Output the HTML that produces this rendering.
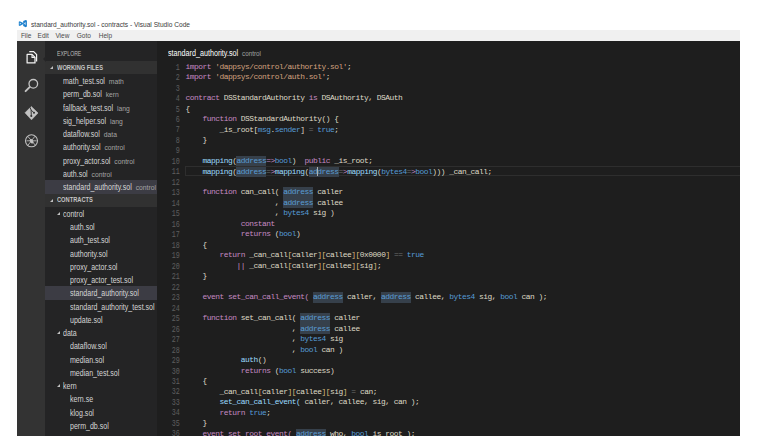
<!DOCTYPE html>
<html><head><meta charset="utf-8"><style>
*{margin:0;padding:0;box-sizing:border-box}
html,body{width:757px;height:439px;overflow:hidden;background:#fff;position:relative;font-family:"Liberation Sans",sans-serif}
.abs{position:absolute}
#title{position:absolute;left:30.5px;top:19.9px;font-size:8px;color:#3a3a3a;white-space:nowrap;line-height:9px;transform:scaleX(0.825);transform-origin:0 0}
#vsico{position:absolute;left:17px;top:18px}
#menu{position:absolute;left:17px;top:30px;width:723px;height:11px;background:#f0f0f0}
#menu span{position:absolute;top:1.5px;font-size:6.5px;color:#4a4a4a;line-height:8px}
#win{position:absolute;left:17px;top:41px;width:723px;height:395px;background:#1e1e1e;overflow:hidden}
#act{position:absolute;left:0;top:0;width:28px;height:395px;background:#333333}
#side{position:absolute;left:28px;top:0;width:112px;height:395px;background:#242425;overflow:hidden}
.ico{position:absolute}
#explore{position:absolute;left:11.7px;top:8.6px;font-size:6.5px;color:#bbbbbb;line-height:8px;transform:scaleX(0.79);transform-origin:0 0}
.row{position:absolute;left:0;width:112px;height:13.26px}
.row.hdr{background:#313131}
.row.sel{background:#3c3c44}
.it{position:absolute;top:2.9px;font-size:8.2px;line-height:9px;color:#d6d6d6;white-space:nowrap;transform:scaleX(0.86);transform-origin:0 0}
.desc{font-size:7.85px;color:#a4a4a4;margin-left:4.6px}
.ht{position:absolute;left:11.7px;top:2.6px;font-size:7px;font-weight:bold;color:#c4c4c4;line-height:8px;white-space:nowrap;transform:scaleX(0.815);transform-origin:0 0}
.tri{position:absolute;top:5px;width:0;height:0;border-left:3px solid transparent;border-bottom:3px solid #c0c0c0}
.tri2{position:absolute;top:5px;width:0;height:0;border-left:3px solid transparent;border-bottom:3px solid #c0c0c0}
#edtitle{position:absolute;left:150.6px;top:8.2px;font-size:8.3px;color:#ffffff;line-height:9px;white-space:nowrap;transform:scaleX(0.865);transform-origin:0 0}
#edtitle span{color:#a0a0a0;font-size:7.3px;margin-left:4.5px}
.ln{position:absolute;left:120px;width:42.9px;text-align:right;font-family:"Liberation Mono",monospace;font-size:8.4px;line-height:10.48px;height:10.48px;color:#5e5e5e;margin-top:0.9px;transform:scaleX(0.8);transform-origin:100% 0}
.cl{position:absolute;left:168.4px;font-family:"Liberation Mono",monospace;font-size:7.9px;letter-spacing:-0.482px;line-height:10.48px;height:10.48px;white-space:pre;color:#d4d4d4}
.hl{background:#36404b;color:#5a9ed6;display:inline-block;height:10.48px;vertical-align:top}
#curline{position:absolute;left:168.4px;width:560px;height:10.2px;border:1px solid #2e2e2e}
#cursor{position:absolute;width:1px;height:9px;background:#aeafad}
#pointer{position:absolute;left:26px;top:14.5px;width:0;height:0;border-top:3px solid transparent;border-bottom:3px solid transparent;border-right:3px solid #252526}
</style></head><body>
<svg id="vsico" width="12" height="12" viewBox="0 0 12 12"><path fill="#1f7fcc" fill-rule="evenodd" d="M6.2 2.9 L8.7 1.9 L9.9 2.5 V8.5 L8.7 9.2 L6.2 8.1 Z M7.1 5.5 L8.5 4.1 V6.9 Z"/><path fill="#2486d0" fill-rule="evenodd" d="M1.8 3.8 L2.8 3.2 L6.4 5.0 V6.1 L2.8 7.9 L1.8 7.4 Z M2.8 4.7 V6.4 L4.0 5.55 Z"/></svg>
<div id="title">standard_authority.sol - contracts - Visual Studio Code</div>
<div id="menu"><span style="left:3.9px">File</span><span style="left:20.6px">Edit</span><span style="left:38.4px">View</span><span style="left:59.8px">Goto</span><span style="left:81.7px">Help</span></div>
<div id="win">
 <div id="act">
<svg class="ico" style="left:0;top:0" width="28" height="160" viewBox="0 0 28 160">
 <path d="M10.1 13.4 H15 L18 16.4 V21.9 H10.1 Z" fill="none" stroke="#f2f2f2" stroke-width="1.25" stroke-linejoin="round"/>
 <path d="M15 13.4 V16.4 H18" fill="none" stroke="#f2f2f2" stroke-width="1.1"/>
 <path d="M12.3 10.6 H16.6 L19.6 13.6 V20.4" fill="none" stroke="#f2f2f2" stroke-width="1.2"/>
 <circle cx="16.3" cy="42.8" r="4.3" fill="none" stroke="#c4c4c4" stroke-width="1.3"/>
 <path d="M12.6 46.2 L8.6 50.2" stroke="#c4c4c4" stroke-width="1.9" stroke-linecap="round"/>
 <path d="M8 71.8 L14.3 65.5 L21 72 L14.5 78.8 Z" fill="#c2c2c2" stroke="#c2c2c2" stroke-width="0.6" stroke-linejoin="round"/>
 <path d="M13 66.3 L14.1 69 L14.3 75 M14.1 69 L17 71.8" fill="none" stroke="#333" stroke-width="0.95"/>
 <circle cx="14.3" cy="75" r="1.05" fill="#333"/><circle cx="17" cy="71.8" r="1.05" fill="#333"/>
 <circle cx="14.5" cy="99.8" r="6" fill="none" stroke="#c2c2c2" stroke-width="1.1"/>
 <ellipse cx="14.6" cy="100.3" rx="1.6" ry="2.4" fill="#c2c2c2" transform="rotate(-35 14.6 100.3)"/>
 <path d="M11.2 95.8 L18.2 104 M17.8 95.4 L11 104.2 M9.5 99.8 H19.6" fill="none" stroke="#c2c2c2" stroke-width="0.85"/>
</svg>
</div>
 <div id="side">
  <div id="explore">EXPLORE</div>
  <div class="row hdr" style="top:20.00px"><span class="tri" style="left:5px"></span><span class="ht">WORKING FILES</span></div><div class="row" style="top:33.26px"><span class="it" style="left:17.8px">math_test.sol<span class="desc">math</span></span></div><div class="row" style="top:46.52px"><span class="it" style="left:17.8px">perm_db.sol<span class="desc">kern</span></span></div><div class="row" style="top:59.78px"><span class="it" style="left:17.8px">fallback_test.sol<span class="desc">lang</span></span></div><div class="row" style="top:73.04px"><span class="it" style="left:17.8px">sig_helper.sol<span class="desc">lang</span></span></div><div class="row" style="top:86.30px"><span class="it" style="left:17.8px">dataflow.sol<span class="desc">data</span></span></div><div class="row" style="top:99.56px"><span class="it" style="left:17.8px">authority.sol<span class="desc">control</span></span></div><div class="row" style="top:112.82px"><span class="it" style="left:17.8px">proxy_actor.sol<span class="desc">control</span></span></div><div class="row" style="top:126.08px"><span class="it" style="left:17.8px">auth.sol<span class="desc">control</span></span></div><div class="row sel" style="top:139.34px"><span class="it" style="left:17.8px">standard_authority.sol<span class="desc">control</span></span></div><div class="row hdr" style="top:152.60px"><span class="tri" style="left:5px"></span><span class="ht">CONTRACTS</span></div><div class="row" style="top:165.86px"><span class="tri2" style="left:12px"></span><span class="it" style="left:17.8px">control</span></div><div class="row" style="top:179.12px"><span class="it" style="left:24.7px">auth.sol</span></div><div class="row" style="top:192.38px"><span class="it" style="left:24.7px">auth_test.sol</span></div><div class="row" style="top:205.64px"><span class="it" style="left:24.7px">authority.sol</span></div><div class="row" style="top:218.90px"><span class="it" style="left:24.7px">proxy_actor.sol</span></div><div class="row" style="top:232.16px"><span class="it" style="left:24.7px">proxy_actor_test.sol</span></div><div class="row sel" style="top:245.42px"><span class="it" style="left:24.7px">standard_authority.sol</span></div><div class="row" style="top:258.68px"><span class="it" style="left:24.7px">standard_authority_test.sol</span></div><div class="row" style="top:271.94px"><span class="it" style="left:24.7px">update.sol</span></div><div class="row" style="top:285.20px"><span class="tri2" style="left:12px"></span><span class="it" style="left:17.8px">data</span></div><div class="row" style="top:298.46px"><span class="it" style="left:24.7px">dataflow.sol</span></div><div class="row" style="top:311.72px"><span class="it" style="left:24.7px">median.sol</span></div><div class="row" style="top:324.98px"><span class="it" style="left:24.7px">median_test.sol</span></div><div class="row" style="top:338.24px"><span class="tri2" style="left:12px"></span><span class="it" style="left:17.8px">kern</span></div><div class="row" style="top:351.50px"><span class="it" style="left:24.7px">kern.se</span></div><div class="row" style="top:364.76px"><span class="it" style="left:24.7px">klog.sol</span></div><div class="row" style="top:378.02px"><span class="it" style="left:24.7px">perm_db.sol</span></div>
 </div>
 <div id="pointer"></div>
 <div id="edtitle">standard_authority.sol<span>control</span></div>
 <div id="curline" style="top:124.70px"></div>
 <div class="ln" style="top:20.70px">1</div><div class="cl" style="top:20.70px"><span style="color:#c58ac2">import</span><span style="color:#dedac6"> </span><span style="color:#d3a17f">&#x27;dappsys/control/authority.sol&#x27;</span><span style="color:#dedac6">;</span></div><div class="ln" style="top:31.18px">2</div><div class="cl" style="top:31.18px"><span style="color:#c58ac2">import</span><span style="color:#dedac6"> </span><span style="color:#d3a17f">&#x27;dappsys/control/auth.sol&#x27;</span><span style="color:#dedac6">;</span></div><div class="ln" style="top:41.66px">3</div><div class="cl" style="top:41.66px"></div><div class="ln" style="top:52.14px">4</div><div class="cl" style="top:52.14px"><span style="color:#c58ac2">contract</span><span style="color:#dedac6"> DSStandardAuthority </span><span style="color:#c58ac2">is</span><span style="color:#dedac6"> DSAuthority, DSAuth</span></div><div class="ln" style="top:62.62px">5</div><div class="cl" style="top:62.62px"><span style="color:#dedac6">{</span></div><div class="ln" style="top:73.10px">6</div><div class="cl" style="top:73.10px"><span style="color:#dedac6">    </span><span style="color:#c58ac2">function</span><span style="color:#dedac6"> DSStandardAuthority() {</span></div><div class="ln" style="top:83.58px">7</div><div class="cl" style="top:83.58px"><span style="color:#dedac6">        _is_root[</span><span style="color:#569cd6">msg</span><span style="color:#dedac6">.</span><span style="color:#569cd6">sender</span><span style="color:#dedac6">] </span><span style="color:#6e6e6e">=</span><span style="color:#dedac6"> </span><span style="color:#569cd6">true</span><span style="color:#dedac6">;</span></div><div class="ln" style="top:94.06px">8</div><div class="cl" style="top:94.06px"><span style="color:#dedac6">    }</span></div><div class="ln" style="top:104.54px">9</div><div class="cl" style="top:104.54px"></div><div class="ln" style="top:115.02px">10</div><div class="cl" style="top:115.02px"><span style="color:#dedac6">    </span><span style="color:#9cdcfe">mapping</span><span style="color:#dedac6">(</span><span class="hl">address</span><span style="color:#c58ac2">=&gt;</span><span style="color:#569cd6">bool</span><span style="color:#dedac6">)  </span><span style="color:#c58ac2">public</span><span style="color:#dedac6"> _is_root;</span></div><div class="ln" style="top:125.50px">11</div><div class="cl" style="top:125.50px"><span style="color:#dedac6">    </span><span style="color:#9cdcfe">mapping</span><span style="color:#dedac6">(</span><span class="hl">address</span><span style="color:#6e6e6e">=</span><span style="color:#c58ac2">&gt;</span><span style="color:#9cdcfe">mapping</span><span style="color:#dedac6">(</span><span class="hl">address</span><span style="color:#6e6e6e">=</span><span style="color:#c58ac2">&gt;</span><span style="color:#9cdcfe">mapping</span><span style="color:#dedac6">(</span><span style="color:#569cd6">bytes4</span><span style="color:#6e6e6e">=</span><span style="color:#c58ac2">&gt;</span><span style="color:#569cd6">bool</span><span style="color:#dedac6">))) _can_call;</span></div><div class="ln" style="top:135.98px">12</div><div class="cl" style="top:135.98px"></div><div class="ln" style="top:146.46px">13</div><div class="cl" style="top:146.46px"><span style="color:#dedac6">    </span><span style="color:#c58ac2">function</span><span style="color:#dedac6"> can_call( </span><span class="hl">address</span><span style="color:#dedac6"> caller</span></div><div class="ln" style="top:156.94px">14</div><div class="cl" style="top:156.94px"><span style="color:#dedac6">                     , </span><span class="hl">address</span><span style="color:#dedac6"> callee</span></div><div class="ln" style="top:167.42px">15</div><div class="cl" style="top:167.42px"><span style="color:#dedac6">                     , </span><span style="color:#569cd6">bytes4</span><span style="color:#dedac6"> sig )</span></div><div class="ln" style="top:177.90px">16</div><div class="cl" style="top:177.90px"><span style="color:#dedac6">             </span><span style="color:#c58ac2">constant</span></div><div class="ln" style="top:188.38px">17</div><div class="cl" style="top:188.38px"><span style="color:#dedac6">             </span><span style="color:#c58ac2">returns</span><span style="color:#dedac6"> (</span><span style="color:#569cd6">bool</span><span style="color:#dedac6">)</span></div><div class="ln" style="top:198.86px">18</div><div class="cl" style="top:198.86px"><span style="color:#dedac6">    {</span></div><div class="ln" style="top:209.34px">19</div><div class="cl" style="top:209.34px"><span style="color:#dedac6">        </span><span style="color:#c58ac2">return</span><span style="color:#dedac6"> _can_call</span><span style="color:#d7ba7d">[</span><span style="color:#dedac6">caller</span><span style="color:#d7ba7d">][</span><span style="color:#dedac6">callee</span><span style="color:#d7ba7d">][</span><span style="color:#dedac6">0x0000</span><span style="color:#d7ba7d">]</span><span style="color:#dedac6"> </span><span style="color:#6e6e6e">==</span><span style="color:#dedac6"> </span><span style="color:#569cd6">true</span></div><div class="ln" style="top:219.82px">20</div><div class="cl" style="top:219.82px"><span style="color:#dedac6">            </span><span style="color:#c58ac2">||</span><span style="color:#dedac6"> _can_call</span><span style="color:#d7ba7d">[</span><span style="color:#dedac6">caller</span><span style="color:#d7ba7d">][</span><span style="color:#dedac6">callee</span><span style="color:#d7ba7d">][</span><span style="color:#dedac6">sig</span><span style="color:#d7ba7d">]</span><span style="color:#dedac6">;</span></div><div class="ln" style="top:230.30px">21</div><div class="cl" style="top:230.30px"><span style="color:#dedac6">    }</span></div><div class="ln" style="top:240.78px">22</div><div class="cl" style="top:240.78px"></div><div class="ln" style="top:251.26px">23</div><div class="cl" style="top:251.26px"><span style="color:#dedac6">    </span><span style="color:#c58ac2">event set_can_call_event(</span><span style="color:#dedac6"> </span><span class="hl">address</span><span style="color:#dedac6"> caller, </span><span class="hl">address</span><span style="color:#dedac6"> callee, </span><span style="color:#569cd6">bytes4</span><span style="color:#dedac6"> sig, </span><span style="color:#569cd6">bool</span><span style="color:#dedac6"> can );</span></div><div class="ln" style="top:261.74px">24</div><div class="cl" style="top:261.74px"></div><div class="ln" style="top:272.22px">25</div><div class="cl" style="top:272.22px"><span style="color:#dedac6">    </span><span style="color:#c58ac2">function</span><span style="color:#dedac6"> set_can_call( </span><span class="hl">address</span><span style="color:#dedac6"> caller</span></div><div class="ln" style="top:282.70px">26</div><div class="cl" style="top:282.70px"><span style="color:#dedac6">                         , </span><span class="hl">address</span><span style="color:#dedac6"> callee</span></div><div class="ln" style="top:293.18px">27</div><div class="cl" style="top:293.18px"><span style="color:#dedac6">                         , </span><span style="color:#569cd6">bytes4</span><span style="color:#dedac6"> sig</span></div><div class="ln" style="top:303.66px">28</div><div class="cl" style="top:303.66px"><span style="color:#dedac6">                         , </span><span style="color:#569cd6">bool</span><span style="color:#dedac6"> can )</span></div><div class="ln" style="top:314.14px">29</div><div class="cl" style="top:314.14px"><span style="color:#dedac6">             </span><span style="color:#9cdcfe">auth</span><span style="color:#dedac6">()</span></div><div class="ln" style="top:324.62px">30</div><div class="cl" style="top:324.62px"><span style="color:#dedac6">             </span><span style="color:#c58ac2">returns</span><span style="color:#dedac6"> (</span><span style="color:#569cd6">bool</span><span style="color:#dedac6"> success)</span></div><div class="ln" style="top:335.10px">31</div><div class="cl" style="top:335.10px"><span style="color:#dedac6">    {</span></div><div class="ln" style="top:345.58px">32</div><div class="cl" style="top:345.58px"><span style="color:#dedac6">        _can_call</span><span style="color:#d7ba7d">[</span><span style="color:#dedac6">caller</span><span style="color:#d7ba7d">][</span><span style="color:#dedac6">callee</span><span style="color:#d7ba7d">][</span><span style="color:#dedac6">sig</span><span style="color:#d7ba7d">]</span><span style="color:#dedac6"> </span><span style="color:#6e6e6e">=</span><span style="color:#dedac6"> can;</span></div><div class="ln" style="top:356.06px">33</div><div class="cl" style="top:356.06px"><span style="color:#dedac6">        </span><span style="color:#9cdcfe">set_can_call_event(</span><span style="color:#dedac6"> caller, callee, sig, can );</span></div><div class="ln" style="top:366.54px">34</div><div class="cl" style="top:366.54px"><span style="color:#dedac6">        </span><span style="color:#c58ac2">return</span><span style="color:#dedac6"> </span><span style="color:#569cd6">true</span><span style="color:#dedac6">;</span></div><div class="ln" style="top:377.02px">35</div><div class="cl" style="top:377.02px"><span style="color:#dedac6">    }</span></div><div class="ln" style="top:387.50px">36</div><div class="cl" style="top:387.50px"><span style="color:#dedac6">    </span><span style="color:#c58ac2">event set_root_event(</span><span style="color:#dedac6"> </span><span class="hl">address</span><span style="color:#dedac6"> who, </span><span style="color:#569cd6">bool</span><span style="color:#dedac6"> is_root );</span></div>
 <div id="cursor" style="left:300.40px;top:126.20px"></div>
</div>
</body></html>
